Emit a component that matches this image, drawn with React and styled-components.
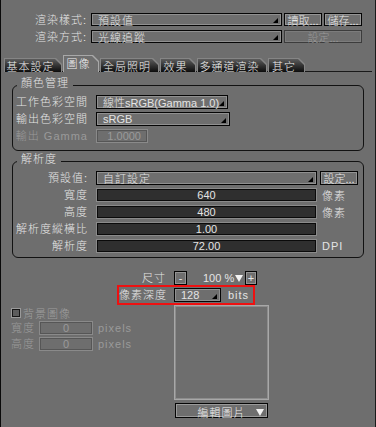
import React from 'react';
import styled, { createGlobalStyle } from 'styled-components';

const BG = '#6e6e6e';

const GlobalStyle = createGlobalStyle`
  html, body { margin: 0; padding: 0; background: ${BG}; }
  * { box-sizing: border-box; }
`;

const Frame = styled.div`
  width: 376px;
  height: 427px;
  overflow: hidden;
  background: ${BG};
  border-left: 1px solid #0a0a0a;
  border-right: 1px solid #1a1a1a;
  font-family: "Liberation Sans", "Noto Sans CJK TC", sans-serif;
  font-size: 11px;
  font-weight: 300;
  color: #e4e4e4;
`;

const TopGrid = styled.div`
  display: grid;
  grid-template-columns: 88px 191px 38px 38px;
  grid-auto-rows: 13px;
  gap: 4px 2px;
  padding-top: 13px;
`;

const Label = styled.div`
  text-align: right;
  padding-right: ${p => p.pr || 0}px;
  width: ${p => (p.w ? `${p.w}px` : 'auto')};
  flex-shrink: 0;
  line-height: 14px;
  letter-spacing: 1px;
  white-space: nowrap;
  color: ${p => (p.disabled ? '#9a9a9a' : '#e4e4e4')};
`;

const Select = styled.div`
  display: flex;
  align-items: center;
  width: ${p => (p.w ? `${p.w}px` : 'auto')};
  height: ${p => p.h || 14}px;
  padding-left: 6px;
  border: 1px solid #050505;
  box-shadow: inset 0 0 0 1px #909090;
  letter-spacing: ${p => (p.latin ? 0 : 1)}px;
  white-space: nowrap;
  color: #e4e4e4;
`;

const Caret = styled.span`
  align-self: flex-end;
  margin: 0 3px 2px auto;
  width: 0;
  height: 0;
  border-left: 5px solid transparent;
  border-bottom: 5px solid #000;
`;

const Button = styled.div`
  display: flex;
  align-items: center;
  justify-content: center;
  width: ${p => (p.w ? `${p.w}px` : 'auto')};
  height: ${p => p.h || 14}px;
  margin-left: ${p => p.ml || 0}px;
  grid-column: ${p => p.span || 'auto'};
  border: 1px solid ${p => (p.disabled ? '#3c3c3c' : '#050505')};
  box-shadow: inset 0 0 0 1px ${p => (p.disabled ? '#7c7c7c' : '#949494')};
  color: ${p => (p.disabled ? '#9a9a9a' : '#e8e8e8')};
  letter-spacing: 0;
  white-space: nowrap;
`;

const TabBar = styled.div`
  display: flex;
  align-items: flex-end;
  gap: 1px;
  height: 17px;
  margin: 12px 3px 0 3px;
  box-shadow: inset 0 -1px 0 #1a1a1a;
`;

const cut = 'polygon(0 0, calc(100% - 6px) 0, 100% 6px, 100% 100%, 0 100%)';

const TabShape = styled.div`
  width: ${p => p.w}px;
  height: ${p => (p.active ? 17 : 14)}px;
  padding: 1px 1px 0 1px;
  background: ${p => (p.active ? '#a8a8a8' : '#858585')};
  clip-path: ${cut};
`;

const TabFace = styled.div`
  height: 100%;
  display: flex;
  align-items: center;
  justify-content: center;
  padding: ${p => (p.active ? '0 5px 3px 0' : '0 5px 0 0')};
  clip-path: ${cut};
  background: ${p => (p.active ? BG : 'linear-gradient(#5c5c5c, #0c0c0c)')};
  color: #f0f0f0;
  letter-spacing: 1px;
  white-space: nowrap;
`;

const Group = styled.div`
  margin: ${p => p.mt}px 11px 0;
  padding-bottom: ${p => p.pb}px;
  border: 1px solid #121212;
  border-radius: 6px;
`;

const GroupTitle = styled.div`
  width: fit-content;
  height: 12px;
  margin: -9px 0 6px 4px;
  padding: 0 4px;
  line-height: 12px;
  background: ${BG};
  letter-spacing: 1px;
`;

const FormGrid = styled.div`
  display: grid;
  grid-template-columns: 80px 221px 1fr;
  grid-auto-rows: 14px;
  gap: 3px 3px;
  align-items: center;
`;

const Field = styled.div`
  display: flex;
  align-items: center;
  justify-content: ${p => (p.right ? 'flex-end' : 'center')};
  width: ${p => (p.w ? `${p.w}px` : 'auto')};
  height: 14px;
  margin-left: ${p => p.ml || 0}px;
  padding-right: ${p => (p.right ? 6 : 0)}px;
  border: 1px solid #8a8a8a;
  box-shadow: inset 0 0 0 1px ${p => (p.disabled ? '#565656' : '#0a0a0a')};
  background: ${p => (p.disabled ? 'transparent' : '#2f2f2f')};
  color: ${p => (p.disabled ? '#9a9a9a' : '#e4e4e4')};
`;

const Unit = styled.div`
  padding-left: 2px;
  letter-spacing: 1px;
  color: ${p => (p.disabled ? '#9a9a9a' : '#e4e4e4')};
  margin-left: ${p => p.ml || 0}px;
`;

const SizeRow = styled.div`
  display: flex;
  align-items: center;
  height: 14px;
  margin-top: 13px;
`;

const Percent = styled.div`
  margin-left: 16px;
  width: 30px;
  white-space: nowrap;
`;

const DownTri = styled.span`
  width: 0;
  height: 0;
  margin: 0 ${p => p.mr || 0}px 0 ${p => p.ml || 0}px;
  border-left: 4px solid transparent;
  border-right: 4px solid transparent;
  border-top: 7px solid #f2f2f2;
  justify-self: end;
`;

const DepthRow = styled.div`
  display: flex;
  align-items: center;
  width: 138px;
  height: 20px;
  margin-left: 116px;
  border: 2px solid #ee1111;
`;

const Bottom = styled.div`
  display: grid;
  grid-template-columns: 173px 95px;
`;

const LeftCol = styled.div`
  padding-left: 10px;
`;

const CheckRow = styled.div`
  display: flex;
  align-items: center;
  height: 10px;
  margin-top: 3px;
  color: #9e9e9e;
  letter-spacing: 1px;
`;

const Check = styled.span`
  width: 10px;
  height: 10px;
  margin-right: 2px;
  border: 1px solid #9a9a9a;
  box-shadow: inset 0 0 0 1px #161616;
  background: #5c5c5c;
`;

const PixRow = styled.div`
  display: flex;
  align-items: center;
  height: 14px;
  margin-top: ${p => p.mt}px;
`;

const Preview = styled.div`
  width: 95px;
  height: 95px;
  border: 1px solid #a8a8a8;
  box-shadow: inset 0 0 0 1px #8c8c8c;
`;

const EditButton = styled.div`
  display: grid;
  grid-template-columns: 1fr auto 1fr;
  align-items: center;
  width: 93px;
  height: 15px;
  margin: 3px 0 0 1px;
  border: 1px solid #050505;
  box-shadow: inset 0 0 0 1px #9a9a9a;
  color: #f0f0f0;
  letter-spacing: 1px;
  span:first-child { grid-column: 2; }
`;

const tabs = [
  { name: '基本設定', w: 58 },
  { name: '圖像', w: 36, active: true },
  { name: '全局照明', w: 59 },
  { name: '效果', w: 36 },
  { name: '多通道渲染', w: 70 },
  { name: '其它', w: 37 },
];

const resolution = [
  { label: '寬度', value: '640', unit: '像素' },
  { label: '高度', value: '480', unit: '像素' },
  { label: '解析度縱橫比', value: '1.00', unit: '' },
  { label: '解析度', value: '72.00', unit: 'DPI' },
];

export default function App() {
  return (
    <Frame>
      <GlobalStyle />
      <TopGrid>
        <Label pr={2}>渲染樣式:</Label>
        <Select h={13}>預設值<Caret /></Select>
        <Button h={13}>讀取...</Button>
        <Button h={13}>儲存...</Button>
        <Label pr={2}>渲染方式:</Label>
        <Select h={13}>光線追蹤<Caret /></Select>
        <Button h={13} span="span 2" disabled>設定...</Button>
      </TopGrid>

      <TabBar>
        {tabs.map(t => (
          <TabShape key={t.name} w={t.w} active={t.active}>
            <TabFace active={t.active}>{t.name}</TabFace>
          </TabShape>
        ))}
      </TabBar>

      <Group mt={13} pb={7}>
        <GroupTitle>顏色管理</GroupTitle>
        <FormGrid>
          <Label pr={5}>工作色彩空間</Label>
          <Select w={132} latin>線性sRGB(Gamma 1.0)<Caret /></Select>
          <span />
          <Label pr={5}>輸出色彩空間</Label>
          <Select w={134} latin>sRGB<Caret /></Select>
          <span />
          <Label pr={5} disabled>輸出 Gamma</Label>
          <Field w={52} right disabled>1.0000</Field>
          <span />
        </FormGrid>
      </Group>

      <Group mt={10} pb={4}>
        <GroupTitle>解析度</GroupTitle>
        <FormGrid>
          <Label pr={5}>預設值:</Label>
          <Select>自訂設定<Caret /></Select>
          <Button w={38}>設定...</Button>
          {resolution.map(r => (
            <React.Fragment key={r.label}>
              <Label pr={5}>{r.label}</Label>
              <Field>{r.value}</Field>
              <Unit>{r.unit}</Unit>
            </React.Fragment>
          ))}
        </FormGrid>
      </Group>

      <SizeRow>
        <Label w={165}>尺寸</Label>
        <Button w={13} ml={8}>-</Button>
        <Percent>100 %</Percent>
        <DownTri ml={2} mr={2} />
        <Button w={12}>+</Button>
      </SizeRow>

      <DepthRow>
        <Label w={55} pr={8}>像素深度</Label>
        <Select w={47} latin>128<Caret /></Select>
        <Unit ml={5}>bits</Unit>
      </DepthRow>

      <Bottom>
        <LeftCol>
          <CheckRow><Check />背景圖像</CheckRow>
          <PixRow mt={3}>
            <Label w={22} disabled>寬度</Label>
            <Field w={54} ml={6} disabled>0</Field>
            <Unit ml={3} disabled>pixels</Unit>
          </PixRow>
          <PixRow mt={2}>
            <Label w={22} disabled>高度</Label>
            <Field w={54} ml={6} disabled>0</Field>
            <Unit ml={3} disabled>pixels</Unit>
          </PixRow>
        </LeftCol>
        <div>
          <Preview />
          <EditButton>
            <span>編輯圖片</span>
            <DownTri mr={3} />
          </EditButton>
        </div>
      </Bottom>
    </Frame>
  );
}
